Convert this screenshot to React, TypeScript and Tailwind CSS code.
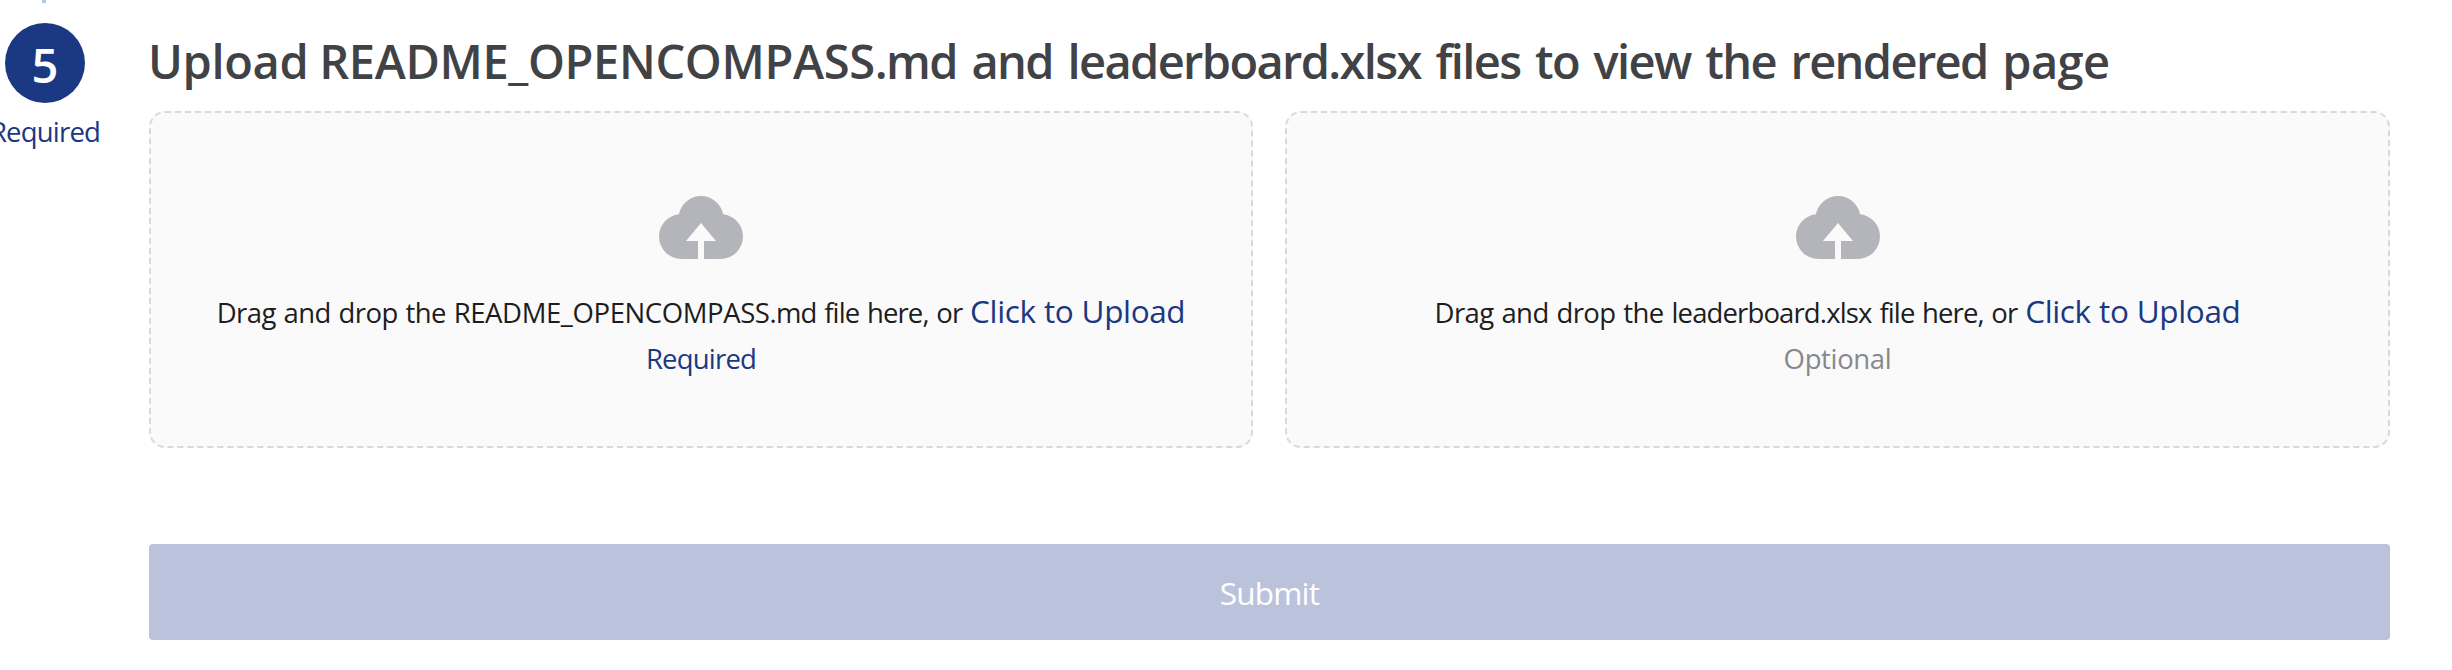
import type { ReactNode } from "react";

function UploadCloud() {
  return (
    <svg viewBox="0 0 1024 1024" className="size-24 shrink-0 fill-[#b4b5bb]" aria-hidden="true">
      <path d="M544 864V672h128L512 480 352 672h128v192H320v-1.6c-5.376.32-10.496 1.6-16 1.6A240 240 0 0 1 64 624c0-123.136 93.12-223.488 212.608-237.248A239.808 239.808 0 0 1 512 192a239.872 239.872 0 0 1 235.456 194.752c119.488 13.76 212.48 114.112 212.48 237.248a240 240 0 0 1-240 240c-5.376 0-10.56-1.28-16-1.6v1.6z" />
    </svg>
  );
}

function DropZone({ file, note }: { file: ReactNode; note: ReactNode }) {
  return (
    <div className="flex h-[337px] min-w-0 flex-col items-center rounded-2xl border-2 border-dashed border-[#d9d9d9] bg-[#fafafa] pt-[65px]">
      <UploadCloud />
      <p className="mt-[15px] text-[27.5px] leading-[48px] tracking-[-0.6px] whitespace-nowrap text-[#1d1d1f] [word-spacing:1.3px]">
        Drag and drop the {file} <span className="tracking-[-0.87px]">file here, or</span>{" "}
        <a className="cursor-pointer text-[31.5px] leading-none tracking-[-0.38px] text-[#1b3882] [word-spacing:0.5px]">
          Click to Upload
        </a>
      </p>
      <p className="mt-0.5 text-[27.5px] leading-10">{note}</p>
    </div>
  );
}

export default function App() {
  return (
    <div className="flex h-[670px] w-[2452px] overflow-hidden bg-white font-['Open_Sans',sans-serif]">
      <aside className="flex w-[90px] shrink-0 flex-col items-center">
        <div className="ml-[-2px] h-[3px] w-1 bg-[#b1c8e6]" />
        <div className="mt-5 flex size-20 shrink-0 items-center justify-center rounded-full bg-[#1b3882] pt-1 text-[47px] leading-none font-semibold text-white">
          5
        </div>
        <div className="mt-[9px] text-[27.5px] leading-10 tracking-[-0.8px] text-[#1b3882]">Required</div>
      </aside>
      <main className="ml-[59px] flex w-[2241px] shrink-0 flex-col pt-[25px]">
        <h2 className="-ml-px h-[72px] text-[47px] leading-[72px] font-semibold whitespace-nowrap text-[#414246]">
          <span className="tracking-[-0.36px] [word-spacing:-1px]">Upload README_OPENCOMPASS</span>
          <span className="tracking-[-1.6px]">.md</span>
          <span className="tracking-[-1.63px] [word-spacing:4px]"> and leaderboard.xlsx files to view the rendered </span>
          <span className="tracking-[-0.6px]">page</span>
        </h2>
        <div className="mt-3.5 grid grid-cols-[1104px_1105px] gap-8">
          <DropZone
            file={
              <>
                <span className="tracking-[-0.4px]">README_OPENCOMPASS</span>
                <span className="tracking-[-0.9px]">.md</span>
              </>
            }
            note={<span className="tracking-[-0.8px] text-[#1b3882]">Required</span>}
          />
          <DropZone
            file={<span className="tracking-[-0.87px]">leaderboard.xlsx</span>}
            note={<span className="tracking-[-0.35px] text-[#87888c]">Optional</span>}
          />
        </div>
        <button
          disabled
          className="mt-24 h-24 rounded bg-[#bbc3dc] pt-px text-[31.5px] leading-none tracking-[-0.8px] text-white"
        >
          Submit
        </button>
      </main>
    </div>
  );
}
